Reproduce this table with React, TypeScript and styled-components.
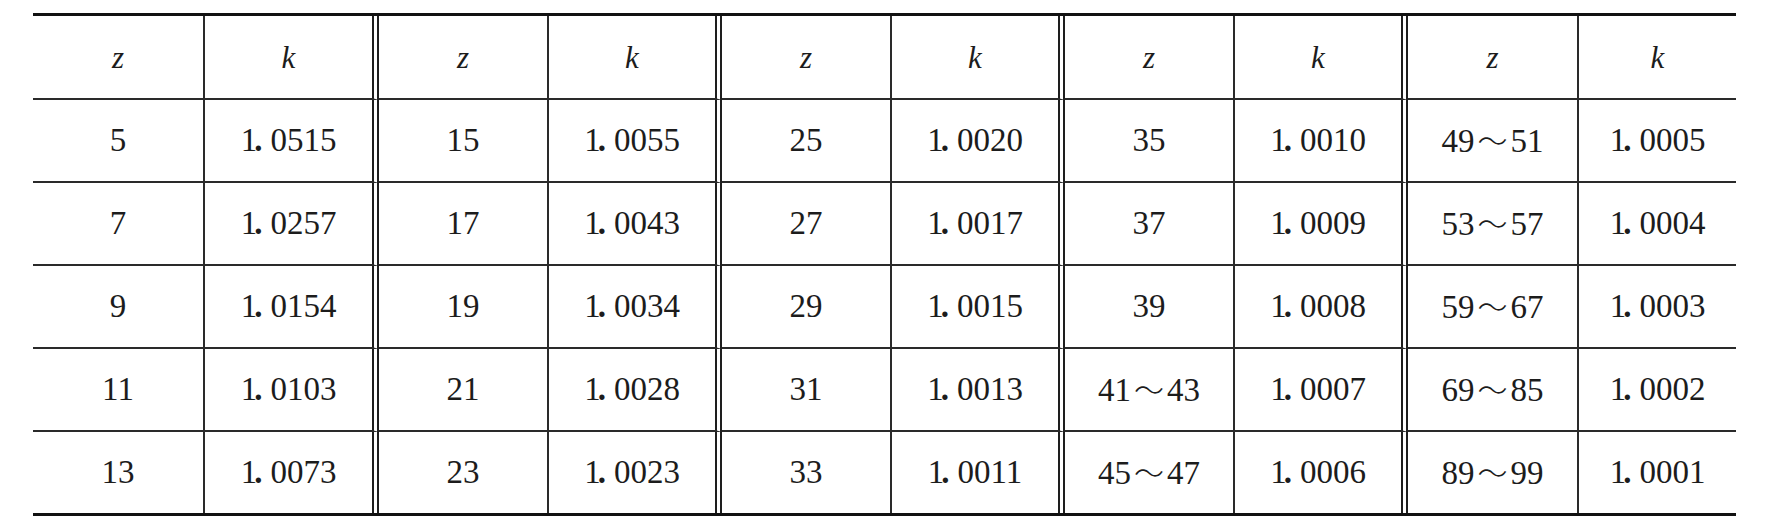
import styled, { createGlobalStyle } from "styled-components";

const GlobalStyle = createGlobalStyle`
  html, body {
    margin: 0;
    padding: 0;
    background: #ffffff;
  }
`;

type Edge = "single" | "double" | "none";

// z / k pairs, one array per row, five pairs per row
const rows: [string, string][][] = [
  [["5", "1.0515"], ["15", "1.0055"], ["25", "1.0020"], ["35", "1.0010"], ["49~51", "1.0005"]],
  [["7", "1.0257"], ["17", "1.0043"], ["27", "1.0017"], ["37", "1.0009"], ["53~57", "1.0004"]],
  [["9", "1.0154"], ["19", "1.0034"], ["29", "1.0015"], ["39", "1.0008"], ["59~67", "1.0003"]],
  [["11", "1.0103"], ["21", "1.0028"], ["31", "1.0013"], ["41~43", "1.0007"], ["69~85", "1.0002"]],
  [["13", "1.0073"], ["23", "1.0023"], ["33", "1.0011"], ["45~47", "1.0006"], ["89~99", "1.0001"]],
];

const colWidths = [172, 174, 170, 173, 170, 173, 170, 173, 171, 157];

const Page = styled.div`
  padding: 13px 0 0 33px;
`;

const Table = styled.table`
  width: 1703px;
  table-layout: fixed;
  border-collapse: separate;
  border-spacing: 0;
  border-top: 3px solid #111;
  border-bottom: 3px solid #111;
  color: #1c1c1c;
  font-family: "Liberation Serif", "Noto Sans CJK SC", serif;
  font-size: 33px;
`;

const Row = styled.tr<{ $height: number }>`
  height: ${({ $height }) => $height}px;
`;

const Cell = styled.td<{ $edge: Edge; $lastRow?: boolean }>`
  padding: 0;
  text-align: center;
  vertical-align: middle;
  line-height: 1;
  border-bottom: ${({ $lastRow }) => ($lastRow ? "none" : "2px solid #2a2a2a")};
  border-right: ${({ $edge }) =>
    $edge === "double" ? "7px double #1e1e1e" : $edge === "single" ? "2px solid #2a2a2a" : "none"};
`;

const HeadCell = styled(Cell).attrs({ as: "th" })`
  font-style: italic;
  font-weight: normal;
  font-size: 31px;
`;

const Tilde = styled.span`
  font-family: "Noto Sans CJK SC", sans-serif;
  font-weight: 300;
  font-size: 30px;
  margin: 0 3px;
`;

const Point = styled.span`
  font-weight: bold;
  margin: 0 8px 0 -3px;
`;

const edgeFor = (col: number): Edge => {
  if (col === 9) return "none";
  return col % 2 === 0 ? "single" : "double";
};

const ZValue = ({ value }: { value: string }) => {
  const [from, to] = value.split("~");
  if (!to) return <>{from}</>;
  return (
    <>
      {from}
      <Tilde>～</Tilde>
      {to}
    </>
  );
};

const KValue = ({ value }: { value: string }) => {
  const [whole, frac] = value.split(".");
  return (
    <>
      {whole}
      <Point>.</Point>
      {frac}
    </>
  );
};

export default function App() {
  return (
    <>
      <GlobalStyle />
      <Page>
        <Table>
          <colgroup>
            {colWidths.map((w, i) => (
              <col key={i} style={{ width: w }} />
            ))}
          </colgroup>
          <thead>
            <Row $height={84}>
              {colWidths.map((_, i) => (
                <HeadCell key={i} $edge={edgeFor(i)}>
                  {i % 2 === 0 ? "z" : "k"}
                </HeadCell>
              ))}
            </Row>
          </thead>
          <tbody>
            {rows.map((pairs, r) => {
              const last = r === rows.length - 1;
              return (
                <Row key={r} $height={last ? 81 : 83}>
                  {pairs.flatMap(([z, k], g) => [
                    <Cell key={`z${g}`} $edge={edgeFor(g * 2)} $lastRow={last}>
                      <ZValue value={z} />
                    </Cell>,
                    <Cell key={`k${g}`} $edge={edgeFor(g * 2 + 1)} $lastRow={last}>
                      <KValue value={k} />
                    </Cell>,
                  ])}
                </Row>
              );
            })}
          </tbody>
        </Table>
      </Page>
    </>
  );
}
